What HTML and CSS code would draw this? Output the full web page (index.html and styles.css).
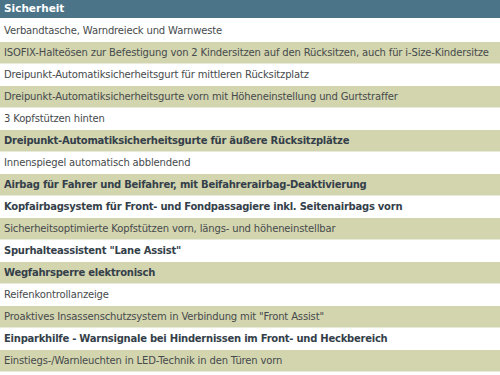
FILE: index.html
```html
<!DOCTYPE html>
<html lang="de">
<head>
<meta charset="utf-8">
<title>Sicherheit</title>
<link rel="stylesheet" href="styles.css">
</head>
<body>
<section class="panel">
  <h2 class="head">Sicherheit</h2>
  <ul class="list">
    <li class="row">Verbandtasche, Warndreieck und Warnweste</li>
    <li class="row alt">ISOFIX-Halteösen zur Befestigung von 2 Kindersitzen auf den Rücksitzen, auch für i-Size-Kindersitze</li>
    <li class="row">Dreipunkt-Automatiksicherheitsgurt für mittleren Rücksitzplatz</li>
    <li class="row alt">Dreipunkt-Automatiksicherheitsgurte vorn mit Höheneinstellung und Gurtstraffer</li>
    <li class="row">3 Kopfstützen hinten</li>
    <li class="row alt strong">Dreipunkt-Automatiksicherheitsgurte für äußere Rücksitzplätze</li>
    <li class="row">Innenspiegel automatisch abblendend</li>
    <li class="row alt strong">Airbag für Fahrer und Beifahrer, mit Beifahrerairbag-Deaktivierung</li>
    <li class="row strong">Kopfairbagsystem für Front- und Fondpassagiere inkl. Seitenairbags vorn</li>
    <li class="row alt">Sicherheitsoptimierte Kopfstützen vorn, längs- und höheneinstellbar</li>
    <li class="row strong">Spurhalteassistent "Lane Assist"</li>
    <li class="row alt strong">Wegfahrsperre elektronisch</li>
    <li class="row">Reifenkontrollanzeige</li>
    <li class="row alt">Proaktives Insassenschutzsystem in Verbindung mit "Front Assist"</li>
    <li class="row strong">Einparkhilfe - Warnsignale bei Hindernissen im Front- und Heckbereich</li>
    <li class="row alt">Einstiegs-/Warnleuchten in LED-Technik in den Türen vorn</li>
  </ul>
</section>
</body>
</html>
```
FILE: styles.css
```css
html, body {
  margin: 0;
  padding: 0;
  background: #ffffff;
}
body {
  font-family: "DejaVu Sans", Verdana, sans-serif;
  font-size: 10px;
  color: #464a4c;
}
.panel {
  display: flex;
  flex-direction: column;
  gap: 2px;
}
.head {
  margin: 0;
  height: 18px;
  line-height: 17px;
  padding: 0 4px;
  background: #4b7489;
  color: #ffffff;
  font-size: 10.5px;
  font-weight: bold;
}
.list {
  list-style: none;
  margin: 0;
  padding: 0;
}
.row {
  height: 21px;
  line-height: 21px;
  padding: 0 4px;
  border-bottom: 1px solid #ffffff;
  white-space: nowrap;
  letter-spacing: -0.15px;
}
.row.alt {
  background: #d3d5af;
  border-bottom-color: #e7eadb;
}
.row.strong {
  font-weight: bold;
  color: #343f4a;
  letter-spacing: -0.25px;
}
```
